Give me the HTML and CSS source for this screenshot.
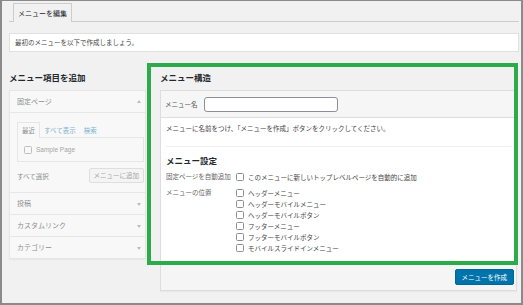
FILE: index.html
```html
<!DOCTYPE html>
<html lang="ja">
<head>
<meta charset="utf-8">
<title>メニューを編集</title>
<link rel="stylesheet" href="styles.css">
</head>
<body>
<div class="frame">
  <div class="wrap">
    <div class="nav"><span class="tab">メニューを編集</span></div>
    <div class="notice">最初のメニューを以下で作成しましょう。</div>
    <div class="cols">
      <div class="left">
        <h2 class="title">メニュー項目を追加</h2>
        <div class="acc">
          <div class="acc-head">固定ページ<span class="arr up"></span></div>
          <div class="acc-body">
            <div class="tabs">
              <span class="tb active">最近</span>
              <span class="tb link">すべて表示</span>
              <span class="tb link">検索</span>
            </div>
            <div class="tabpanel"><span class="item"><span class="cb"></span>Sample Page</span></div>
            <div class="acts"><span>すべて選択</span><span class="btn2">メニューに追加</span></div>
          </div>
          <div class="acc-head">投稿<span class="arr down"></span></div>
          <div class="acc-head">カスタムリンク<span class="arr down"></span></div>
          <div class="acc-head last">カテゴリー<span class="arr down"></span></div>
        </div>
      </div>
      <div class="right">
        <h2 class="title">メニュー構造</h2>
        <div class="panel">
          <div class="phead">
            <span class="plabel">メニュー名</span>
            <input class="name" type="text">
          </div>
          <div class="pbody">
            <p class="desc">メニューに名前をつけ、「メニューを作成」ボタンをクリックしてください。</p>
            <div class="settings">
              <h3 class="stitle">メニュー設定</h3>
              <div class="row first">
                <span class="lbl">固定ページを自動追加</span>
                <div class="opts">
                  <span class="item"><span class="cb"></span>このメニューに新しいトップレベルページを自動的に追加</span>
                </div>
              </div>
              <div class="row">
                <span class="lbl">メニューの位置</span>
                <div class="opts">
                  <span class="item"><span class="cb"></span>ヘッダーメニュー</span>
                  <span class="item"><span class="cb"></span>ヘッダーモバイルメニュー</span>
                  <span class="item"><span class="cb"></span>ヘッダーモバイルボタン</span>
                  <span class="item"><span class="cb"></span>フッターメニュー</span>
                  <span class="item"><span class="cb"></span>フッターモバイルボタン</span>
                  <span class="item"><span class="cb"></span>モバイルスライドインメニュー</span>
                </div>
              </div>
            </div>
          </div>
          <div class="pfoot"><span class="btn">メニューを作成</span></div>
        </div>
      </div>
    </div>
  </div>
  <div class="highlight"></div>
</div>
</body>
</html>
```

FILE: styles.css
```css
body {
  margin: 0;
  font-family: "Noto Sans CJK JP", "Noto Sans", sans-serif;
}

.frame {
  position: relative;
  width: 523px;
  height: 305px;
  box-sizing: border-box;
  border: 2px solid #8a8a8a;
  border-top-width: 1px;
  background: #f1f1f1;
  color: #444;
  font-size: 6.5px;
  overflow: hidden;
}

.wrap {
  padding: 2px 2px 0 7px;
}

/* tab */
.nav {
  height: 18px;
  border-bottom: 1px solid #ccc;
  padding-left: 4px;
  display: flex;
  align-items: flex-end;
}

.tab {
  height: 18px;
  line-height: 18px;
  margin-bottom: -1px;
  padding: 0 4px;
  border: 1px solid #ccc;
  border-bottom: none;
  background: #f1f1f1;
  font-size: 7px;
  color: #23282d;
}

/* notice */
.notice {
  margin-top: 11px;
  height: 17px;
  line-height: 17px;
  border: 1px solid #e0e0e0;
  background: #fff;
  padding-left: 5px;
  color: #444;
}

/* columns */
.cols {
  display: flex;
  gap: 14px;
  margin-top: 18px;
}

.left {
  width: 137px;
  flex: none;
}

.right {
  flex: 1;
  margin-right: 2px;
}

.title {
  margin: 0 0 6px;
  font-size: 8.5px;
  line-height: 14px;
  font-weight: bold;
  color: #23282d;
}

/* accordion (disabled look) */
.acc {
  border: 1px solid #ddd;
  background: #fff;
  opacity: 0.5;
  color: #23282d;
  box-shadow: 0 1px 1px rgba(0, 0, 0, 0.06);
}

.acc-head {
  position: relative;
  height: 21px;
  line-height: 21px;
  padding-left: 7px;
  border-bottom: 1px solid #ddd;
  font-size: 7px;
}

.acc-head.last {
  border-bottom: none;
}

.arr {
  position: absolute;
  right: 4px;
  top: 9px;
  width: 0;
  height: 0;
  border-left: 2px solid transparent;
  border-right: 2px solid transparent;
}

.arr.up {
  border-bottom: 3px solid #888;
}

.arr.down {
  border-top: 3px solid #888;
  top: 10px;
}

.acc-body {
  padding: 9px 1px 9px 7px;
  border-bottom: 1px solid #ddd;
}

.tabs {
  display: flex;
  align-items: flex-end;
  height: 15px;
}

.tb {
  line-height: 14px;
  padding: 0 4px;
}

.tb.active {
  border: 1px solid #ddd;
  border-bottom: none;
  background: #fff;
  height: 15px;
  margin-bottom: -1px;
  position: relative;
  z-index: 1;
}

.tb.link {
  color: #0073aa;
}

.tabpanel {
  border: 1px solid #ddd;
  height: 23px;
  padding-left: 6px;
  display: flex;
  align-items: center;
  font-family: "Liberation Sans", "Noto Sans", sans-serif;
  color: #555;
}

.acts {
  margin-top: 6px;
  display: flex;
  justify-content: space-between;
  align-items: center;
  height: 15px;
}

.btn2 {
  height: 13px;
  line-height: 13px;
  padding: 0 4px;
  border: 1px solid #ccc;
  border-radius: 2px;
  background: #f7f7f7;
  color: #555;
}

/* checkbox */
.item {
  display: flex;
  align-items: center;
  height: 11px;
}

.cb {
  width: 6px;
  height: 6px;
  border: 1px solid #8c8f94;
  border-radius: 1.5px;
  background: #fff;
  margin-right: 4px;
  flex: none;
}

/* right panel */
.panel {
  border: 1px solid #ddd;
  background: #fff;
  box-shadow: 0 1px 1px rgba(0, 0, 0, 0.04);
}

.phead {
  height: 26px;
  background: #f6f6f6;
  border-bottom: 1px solid #ddd;
  display: flex;
  align-items: center;
  padding-left: 4px;
}

.plabel {
  color: #555;
}

.name {
  margin: 0 0 0 6px;
  width: 134px;
  height: 15px;
  box-sizing: border-box;
  border: 1px solid #8c8f94;
  border-radius: 3px;
  background: #fff;
  padding: 0;
  font-size: 6.5px;
}

.pbody {
  padding: 0 4px 9px 5px;
}

.desc {
  margin: 0;
  padding-top: 5px;
  line-height: 10px;
  color: #444;
}

.settings {
  margin-top: 13px;
  border-top: 1px solid #eee;
}

.stitle {
  margin: 0;
  padding-top: 7px;
  font-size: 8.5px;
  line-height: 12px;
  font-weight: bold;
  color: #23282d;
}

.row {
  display: flex;
  margin-top: 5px;
}

.lbl {
  width: 70px;
  flex: none;
  line-height: 11px;
  color: #666;
}

.opts {
  display: flex;
  flex-direction: column;
  color: #444;
}

.pfoot {
  height: 27px;
  border-top: 1px solid #ddd;
  background: #f5f5f5;
  display: flex;
  align-items: center;
  justify-content: flex-end;
  padding-right: 2px;
}

.btn {
  height: 14px;
  line-height: 14px;
  padding: 0 6px;
  background: #0073aa;
  border: 1px solid #006799;
  border-radius: 2px;
  color: #fff;
}

/* annotation overlay */
.highlight {
  position: absolute;
  left: 145px;
  top: 62px;
  width: 371px;
  height: 202px;
  box-sizing: border-box;
  border: 4px solid #2bab4a;
  pointer-events: none;
}
```
